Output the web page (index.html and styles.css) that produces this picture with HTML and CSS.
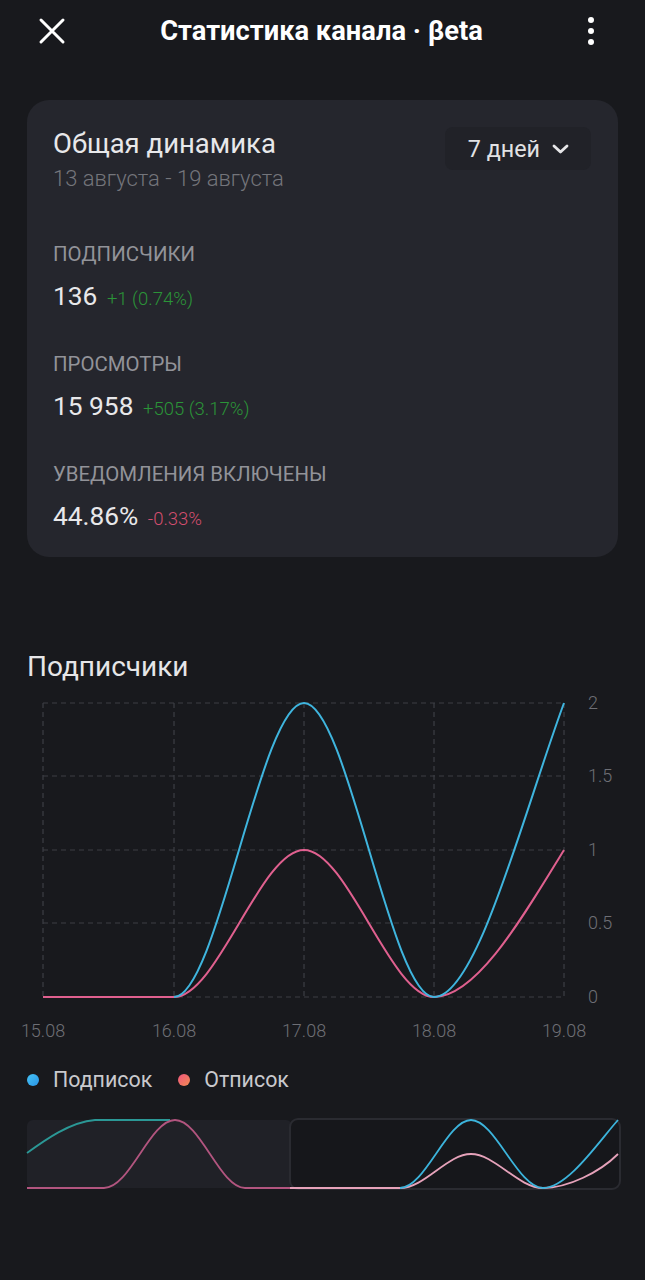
FILE: index.html
```html
<!DOCTYPE html>
<html>
<head>
<meta charset="utf-8">
<link rel="stylesheet" href="styles.css">
</head>
<body>
<div class="topbar">
    <button class="icon-btn">
        <svg width="28" height="28" viewBox="0 0 28 28"><path d="M3 3 L25 25 M25 3 L3 25" stroke="#fff" stroke-width="3" stroke-linecap="round"/></svg>
    </button>
    <div class="topbar-title">Статистика канала · βeta</div>
    <button class="icon-btn">
        <svg width="8" height="28" viewBox="0 0 8 28"><circle cx="4" cy="3" r="3" fill="#fff"/><circle cx="4" cy="14" r="3" fill="#fff"/><circle cx="4" cy="25" r="3" fill="#fff"/></svg>
    </button>
</div>

<div class="card">
    <div class="card-head">
        <div>
            <div class="card-title">Общая динамика</div>
            <div class="card-sub">13 августа - 19 августа</div>
        </div>
        <div class="period">
            7 дней
            <svg width="17" height="12" viewBox="0 0 17 12"><path d="M2 3 L8.5 9 L15 3" fill="none" stroke="#e6e6e8" stroke-width="2.8" stroke-linecap="round" stroke-linejoin="round"/></svg>
        </div>
    </div>

    <div class="stats">
        <div class="stat">
            <div class="stat-label">ПОДПИСЧИКИ</div>
            <div class="stat-value">136 <span class="delta up">+1 (0.74%)</span></div>
        </div>
        <div class="stat">
            <div class="stat-label">ПРОСМОТРЫ</div>
            <div class="stat-value">15 958 <span class="delta up">+505 (3.17%)</span></div>
        </div>
        <div class="stat">
            <div class="stat-label">УВЕДОМЛЕНИЯ ВКЛЮЧЕНЫ</div>
            <div class="stat-value">44.86% <span class="delta down">-0.33%</span></div>
        </div>
    </div>
</div>

<div class="section-title">Подписчики</div>

<svg class="chart" width="645" height="360" viewBox="0 0 645 360">
    <g class="grid">
        <line x1="43" y1="13" x2="564" y2="13"/>
        <line x1="43" y1="86" x2="564" y2="86"/>
        <line x1="43" y1="160" x2="564" y2="160"/>
        <line x1="43" y1="233" x2="564" y2="233"/>
        <line x1="43" y1="307" x2="564" y2="307"/>
        <line x1="43" y1="13" x2="43" y2="307"/>
        <line x1="174" y1="13" x2="174" y2="307"/>
        <line x1="304" y1="13" x2="304" y2="307"/>
        <line x1="434" y1="13" x2="434" y2="307"/>
        <line x1="564" y1="13" x2="564" y2="307"/>
    </g>
    <g class="ylabels">
        <text x="588" y="19">2</text>
        <text x="588" y="92">1.5</text>
        <text x="588" y="166">1</text>
        <text x="588" y="239">0.5</text>
        <text x="588" y="313">0</text>
    </g>
    <g class="xlabels">
        <text x="43" y="347">15.08</text>
        <text x="174" y="347">16.08</text>
        <text x="304" y="347">17.08</text>
        <text x="434" y="347">18.08</text>
        <text x="564" y="347">19.08</text>
    </g>
    <path class="line-pink" d="M43,307 L174,307 C217,307 261,160 304,160 C347,160 391,307 434,307 C477,307 524,225 564,160"/>
    <path class="line-blue" d="M174,307 C217,307 261,13 304,13 C347,13 391,307 434,307 C477,307 524,121 564,13"/>
</svg>

<div class="legend">
    <div class="legend-item"><span class="dot dot-blue"></span>Подписок</div>
    <div class="legend-item"><span class="dot dot-pink"></span>Отписок</div>
</div>

<svg class="navigator" width="645" height="90" viewBox="0 0 645 90">
    <rect x="27" y="10" width="265" height="68" rx="6" fill="#202127"/>
    <rect x="290" y="9" width="330" height="70" rx="8" fill="#16171b" stroke="#2a2b31" stroke-width="2"/>
    <path d="M27,43 C45,30 70,12 95,10 L170,10" fill="none" stroke="#2b9896" stroke-width="1.8"/>
    <path d="M27,78 L104,78 C130,78 150,10 175,10 C200,10 220,78 245,78 L290,78" fill="none" stroke="#b2557f" stroke-width="1.8"/>
    <path d="M290,78 L400,78 C425,78 447,44 471,44 C495,44 518,78 543,78 C568,78 600,62 618,44" fill="none" stroke="#e6a2ba" stroke-width="1.8"/>
    <path d="M400,78 C425,78 447,10 471,10 C495,10 518,78 543,78 C568,78 600,30 618,10" fill="none" stroke="#3cb4dc" stroke-width="1.8"/>
</svg>
</body>
</html>
```

FILE: styles.css
```css
body {
    margin: 0;
    background-color: #18191d;
    font-family: Roboto, "Noto Sans", sans-serif;
    color: #e6e6e8;
}

.topbar {
    display: flex;
    align-items: center;
    justify-content: space-between;
    height: 62px;
    padding: 0 26px 0 24px;
}

.icon-btn {
    display: flex;
    align-items: center;
    justify-content: center;
    width: 56px;
    height: 48px;
    padding: 0;
    border: none;
    background: none;
}

.topbar-title {
    font-size: 27.3px;
    font-weight: 700;
    color: #fff;
}

.card {
    margin: 38px 27px 0;
    padding: 28px 27px 25px 26px;
    border-radius: 22px;
    background-color: #25262d;
}

.card-head {
    display: flex;
    justify-content: space-between;
    align-items: flex-start;
}

.card-title {
    font-size: 27.5px;
    line-height: 32px;
    font-weight: 400;
    color: #e8e8ea;
}

.card-sub {
    margin-top: 5px;
    font-size: 22px;
    line-height: 28px;
    font-weight: 300;
    color: #74757b;
}

.period {
    display: flex;
    align-items: center;
    gap: 12px;
    margin-top: -1px;
    height: 43px;
    padding: 0 22px 0 23px;
    border-radius: 8px;
    background-color: #212228;
    font-size: 23.3px;
    color: #e2e2e4;
}

.stats {
    display: flex;
    flex-direction: column;
    gap: 39px;
    margin-top: 48px;
}

.stat-label {
    font-size: 20.4px;
    line-height: 26px;
    color: #929399;
}

.stat-value {
    margin-top: 13px;
    font-size: 26.3px;
    line-height: 32px;
    color: #e8e8ea;
}

.delta {
    margin-left: 3px;
    font-size: 18.5px;
    line-height: 20px;
    font-weight: 300;
}

.up {
    color: #2b9438;
}

.down {
    color: #d24e6e;
}

.section-title {
    margin: 93px 27px 0;
    font-size: 28px;
    line-height: 34px;
    font-weight: 400;
    color: #e6e6e8;
}

.chart {
    display: block;
    margin-top: 6px;
}

.grid line {
    stroke: #3d3e45;
    stroke-width: 1.2;
    stroke-dasharray: 5 4;
}

.ylabels text,
.xlabels text {
    font-family: Roboto, sans-serif;
    font-size: 18px;
    font-weight: 300;
    fill: #6e6f75;
}

.xlabels text {
    text-anchor: middle;
}

.line-blue,
.line-pink {
    fill: none;
    stroke-width: 2;
}

.line-blue {
    stroke: #3fb5de;
}

.line-pink {
    stroke: #e0608f;
}

.legend {
    display: flex;
    gap: 26px;
    margin: 15px 0 0 27px;
}

.legend-item {
    display: flex;
    align-items: center;
    gap: 14px;
    font-size: 21.4px;
    line-height: 30px;
    color: #c9c9cd;
}

.dot {
    width: 12px;
    height: 12px;
    border-radius: 50%;
}

.dot-blue {
    background: linear-gradient(135deg, #45c4f5, #2a94e6);
}

.dot-pink {
    background: linear-gradient(135deg, #f0567e, #f18a52);
}

.navigator {
    display: block;
    margin-top: 15px;
}
```
